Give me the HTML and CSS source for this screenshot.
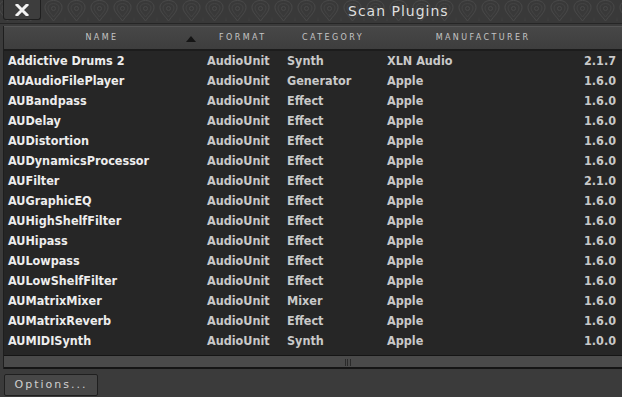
FILE: index.html
```html
<!DOCTYPE html>
<html lang="en">
<head>
    <meta charset="UTF-8">
    <title>Scan Plugins</title>
    <link rel="stylesheet" href="styles.css">
</head>
<body>
    <div class="window">
        <div class="titlebar">
            <svg class="pattern" width="622" height="23">
                <defs>
                    <pattern id="ogee" width="23" height="23" patternUnits="userSpaceOnUse" x="-4" y="-1">
                        <path d="M11.5 22 C8 17 3 13 3 8.5 C3 4 7 1.5 11.5 1.5 C16 1.5 20 4 20 8.5 C20 13 15 17 11.5 22 Z" fill="none" stroke="#484848" stroke-width="1"/>
                        <path d="M11.5 18 C9 14.5 6 12 6 9 C6 6 8.5 4.5 11.5 4.5 C14.5 4.5 17 6 17 9 C17 12 14 14.5 11.5 18 Z" fill="none" stroke="#424242" stroke-width="1"/>
                        <circle cx="11.5" cy="9.5" r="2" fill="none" stroke="#474747"/>
                        <path d="M0 22 C0 17 -3 14 -3 10 M23 22 C23 17 26 14 26 10" fill="none" stroke="#424242"/>
                    </pattern>
                </defs>
                <rect width="622" height="23" fill="url(#ogee)"/>
            </svg>
            <button class="close">
                <svg width="14" height="12" viewBox="0 0 14 12">
                    <path d="M2 1 L12 11 M12 1 L2 11" stroke="#f2f2f2" stroke-width="3" stroke-linecap="square"/>
                </svg>
            </button>
            <div class="title">Scan Plugins</div>
        </div>

        <div class="list">
            <div class="head">
                <div class="hcell hname">Name<span class="sort"></span></div>
                <div class="hcell hformat">Format</div>
                <div class="hcell hcat">Category</div>
                <div class="hcell hman">Manufacturer</div>
            </div>
            <div class="rows">
                <div class="row"><span class="name">Addictive Drums 2</span><span>AudioUnit</span><span>Synth</span><span>XLN Audio</span><span class="ver">2.1.7</span></div>
                <div class="row"><span class="name">AUAudioFilePlayer</span><span>AudioUnit</span><span>Generator</span><span>Apple</span><span class="ver">1.6.0</span></div>
                <div class="row"><span class="name">AUBandpass</span><span>AudioUnit</span><span>Effect</span><span>Apple</span><span class="ver">1.6.0</span></div>
                <div class="row"><span class="name">AUDelay</span><span>AudioUnit</span><span>Effect</span><span>Apple</span><span class="ver">1.6.0</span></div>
                <div class="row"><span class="name">AUDistortion</span><span>AudioUnit</span><span>Effect</span><span>Apple</span><span class="ver">1.6.0</span></div>
                <div class="row"><span class="name">AUDynamicsProcessor</span><span>AudioUnit</span><span>Effect</span><span>Apple</span><span class="ver">1.6.0</span></div>
                <div class="row"><span class="name">AUFilter</span><span>AudioUnit</span><span>Effect</span><span>Apple</span><span class="ver">2.1.0</span></div>
                <div class="row"><span class="name">AUGraphicEQ</span><span>AudioUnit</span><span>Effect</span><span>Apple</span><span class="ver">1.6.0</span></div>
                <div class="row"><span class="name">AUHighShelfFilter</span><span>AudioUnit</span><span>Effect</span><span>Apple</span><span class="ver">1.6.0</span></div>
                <div class="row"><span class="name">AUHipass</span><span>AudioUnit</span><span>Effect</span><span>Apple</span><span class="ver">1.6.0</span></div>
                <div class="row"><span class="name">AULowpass</span><span>AudioUnit</span><span>Effect</span><span>Apple</span><span class="ver">1.6.0</span></div>
                <div class="row"><span class="name">AULowShelfFilter</span><span>AudioUnit</span><span>Effect</span><span>Apple</span><span class="ver">1.6.0</span></div>
                <div class="row"><span class="name">AUMatrixMixer</span><span>AudioUnit</span><span>Mixer</span><span>Apple</span><span class="ver">1.6.0</span></div>
                <div class="row"><span class="name">AUMatrixReverb</span><span>AudioUnit</span><span>Effect</span><span>Apple</span><span class="ver">1.6.0</span></div>
                <div class="row"><span class="name">AUMIDISynth</span><span>AudioUnit</span><span>Synth</span><span>Apple</span><span class="ver">1.0.0</span></div>
            </div>
            <div class="hscroll"><span class="grip"></span></div>
        </div>

        <div class="footer">
            <button class="options">Options...</button>
        </div>
    </div>
</body>
</html>
```

FILE: styles.css
```css
* {
    margin: 0;
    padding: 0;
    box-sizing: border-box;
}
body, html {
    width: 622px;
    height: 397px;
    overflow: hidden;
    background-color: #3b3b3b;
    font-family: "DejaVu Sans Condensed", "DejaVu Sans", sans-serif;
}
.window {
    display: flex;
    flex-direction: column;
    height: 397px;
}
.titlebar {
    position: relative;
    height: 24px;
    background-color: #393939;
    border-bottom: 1px solid #262626;
    display: flex;
    align-items: flex-start;
}
.pattern {
    position: absolute;
    left: 0;
    top: 0;
}
.close {
    position: relative;
    margin-left: 3px;
    width: 38px;
    height: 20px;
    background-color: #3d3d3d;
    border: 1px solid #1f1f1f;
    border-top: none;
    border-radius: 0 0 3px 3px;
    display: flex;
    align-items: center;
    justify-content: center;
}
.title {
    position: relative;
    margin-left: 307px;
    color: #dedede;
    font-size: 14px;
    letter-spacing: 1px;
    line-height: 23px;
    font-family: "DejaVu Sans", sans-serif;
}
.list {
    margin: 2px 0 0 3px;
    border-left: 1px solid #1e1e1e;
    background-color: #262626;
}
.head {
    display: flex;
    height: 25px;
    background: linear-gradient(#474747, #3e3e3e);
    border-top: 1px solid #555;
    border-bottom: 2px solid #1c1c1c;
    color: #c4c4c4;
    font-size: 8px;
    letter-spacing: 2.4px;
    text-transform: uppercase;
    line-height: 22px;
    font-family: "DejaVu Sans", sans-serif;
}
.hcell {
    position: relative;
}
.hname {
    width: 196px;
    text-align: center;
}
.sort {
    position: absolute;
    right: 4px;
    top: 9px;
    border-left: 5px solid transparent;
    border-right: 5px solid transparent;
    border-bottom: 6px solid #151515;
}
.hformat {
    width: 90px;
    padding-left: 19px;
}
.hcat {
    width: 110px;
    padding-left: 12px;
}
.hman {
    width: 166px;
    text-align: center;
}
.rows {
    padding-bottom: 4px;
}
.row {
    display: grid;
    grid-template-columns: 199px 80px 100px 1fr 60px;
    height: 20px;
    line-height: 20px;
    padding: 0 6px 0 4px;
    color: #c9c9c9;
    font-size: 12.5px;
    font-weight: bold;
}
.row .name {
    color: #ededed;
}
.row .ver {
    text-align: right;
}
.hscroll {
    position: relative;
    height: 14px;
    background-color: #4a4a4a;
    border-top: 1px solid #151515;
    border-bottom: 2px solid #151515;
}
.grip {
    position: absolute;
    left: 341px;
    top: 3px;
    width: 6px;
    height: 7px;
    border-left: 1px solid #2a2a2a;
    border-right: 1px solid #2a2a2a;
}
.grip::after {
    content: "";
    position: absolute;
    left: 1px;
    top: 0;
    width: 1px;
    height: 7px;
    background-color: #2a2a2a;
}
.footer {
    flex: 1;
    padding: 4px 0 0 4px;
    background-color: #3b3b3b;
}
.options {
    width: 94px;
    height: 22px;
    background-color: #474747;
    border: 1px solid #1f1f1f;
    border-radius: 2px;
    color: #cfcfcf;
    font-size: 11px;
    letter-spacing: 2px;
    font-family: "DejaVu Sans", sans-serif;
}
```
